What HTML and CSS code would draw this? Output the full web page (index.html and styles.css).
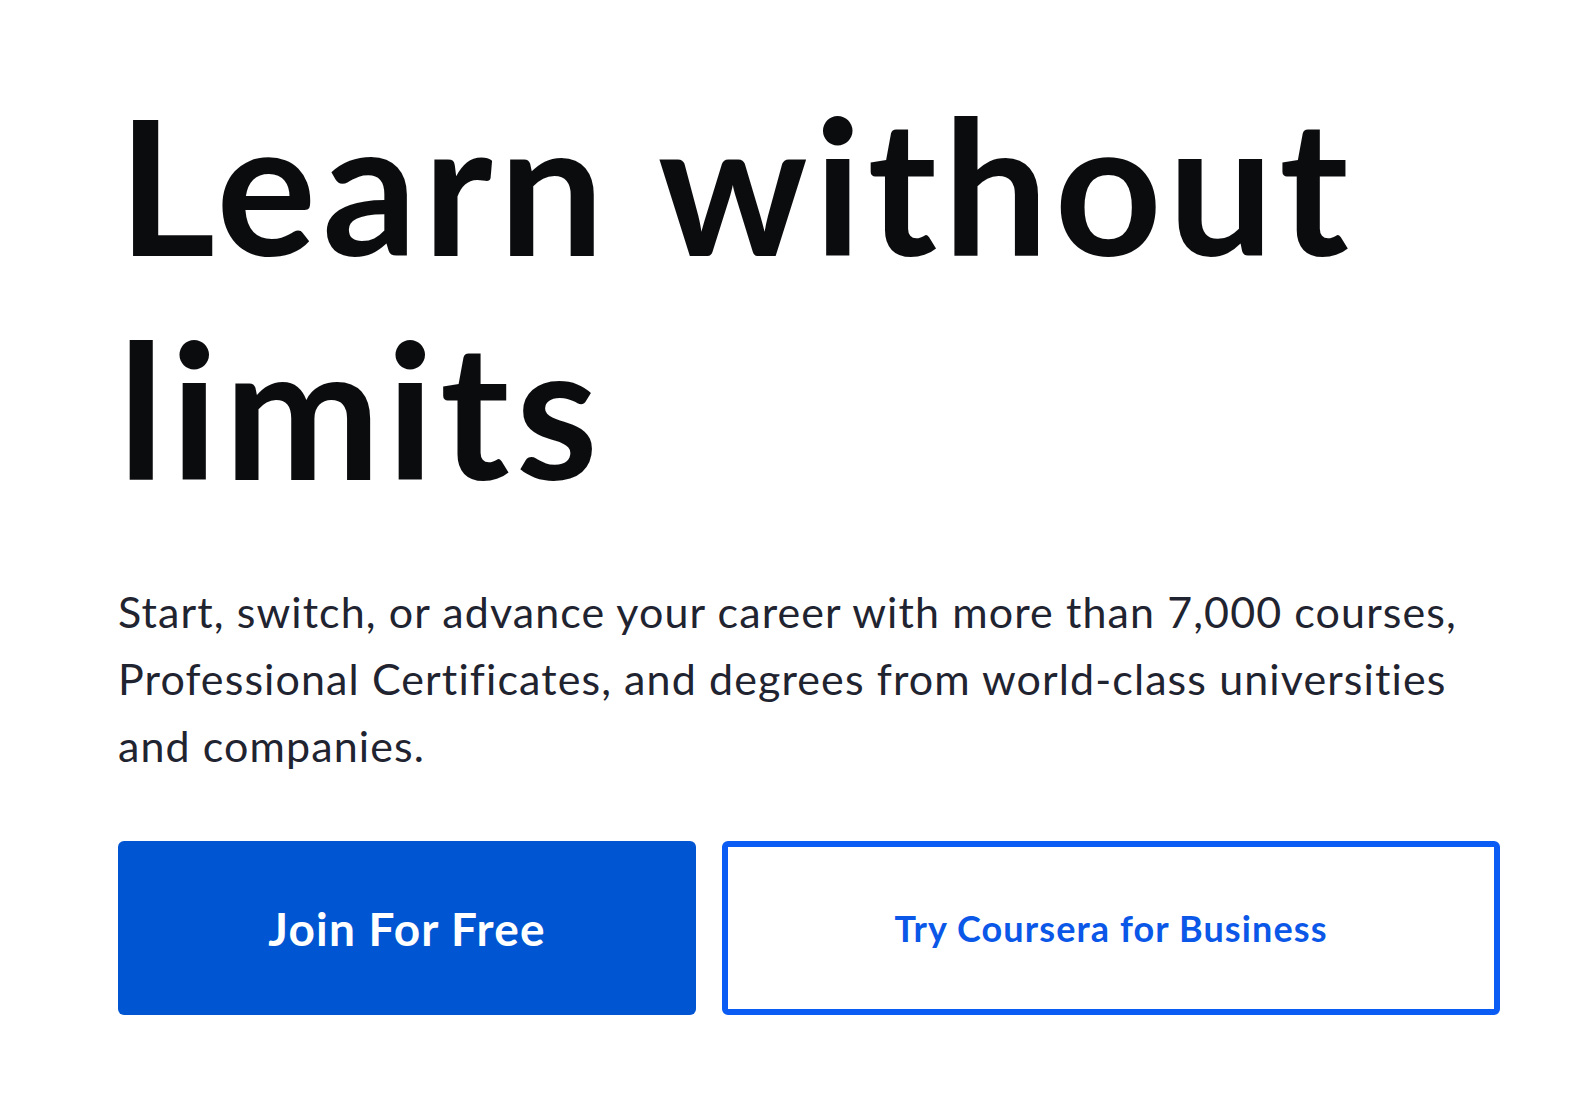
FILE: index.html
```html
<!DOCTYPE html>
<html lang="en">
<head>
<meta charset="utf-8">
<title>Learn without limits</title>
<link rel="stylesheet" href="styles.css">
</head>
<body>
<main class="hero">
  <h1 class="hero-title">Learn without<br>limits</h1>
  <p class="hero-text">Start, switch, or advance your career with more than 7,000 courses,<br>Professional Certificates, and degrees from world-class universities<br>and companies.</p>
  <div class="hero-actions">
    <a class="btn btn-primary" href="#">Join For Free</a>
    <a class="btn btn-outline" href="#">Try Coursera for Business</a>
  </div>
</main>
</body>
</html>
```

FILE: styles.css
```css
html, body {
  margin: 0;
  padding: 0;
  background: #ffffff;
}

body {
  font-family: "Lato", "Noto Sans", sans-serif;
}

.hero {
  padding: 72px 0 0 118px;
  display: flex;
  flex-direction: column;
}

.hero-title {
  margin: 0;
  font-size: 187px;
  line-height: 224px;
  font-weight: 700;
  color: #0b0c0e;
  letter-spacing: 6px;
}

.hero-text {
  margin: 58px 0 0 0;
  font-size: 43px;
  line-height: 67px;
  font-weight: 400;
  color: #1f2430;
  letter-spacing: 1.1px;
}

.hero-actions {
  margin-top: 62px;
  display: flex;
  gap: 26px;
}

.btn {
  box-sizing: border-box;
  height: 174px;
  display: flex;
  align-items: center;
  justify-content: center;
  text-decoration: none;
  border-radius: 6px;
}

.btn-primary {
  width: 578px;
  background: #0056d2;
  color: #ffffff;
  font-size: 46px;
  font-weight: 700;
  letter-spacing: 1.2px;
}

.btn-outline {
  width: 778px;
  border: 6px solid #0a5cf4;
  background: #ffffff;
  color: #0a57e8;
  font-size: 36px;
  font-weight: 700;
  letter-spacing: 1.1px;
}
```
